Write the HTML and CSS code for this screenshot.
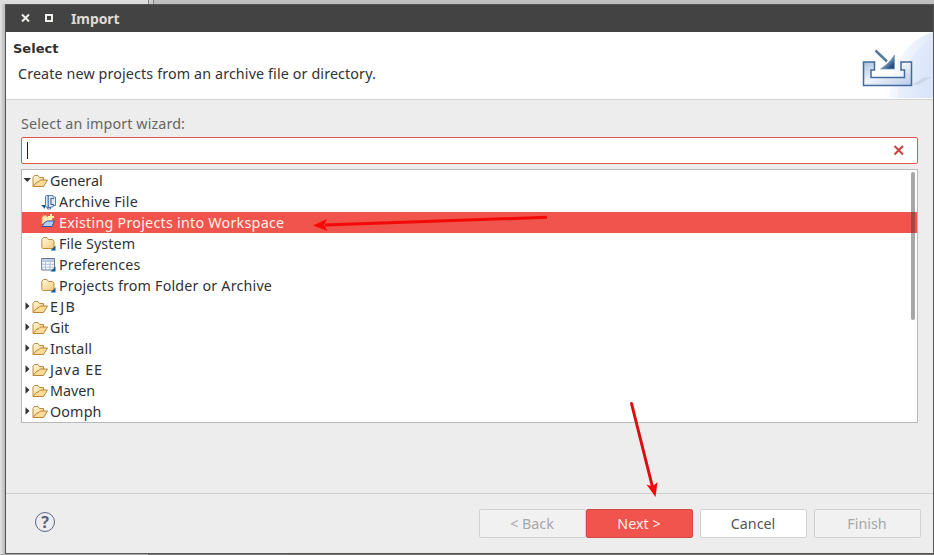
FILE: index.html
```html
<!DOCTYPE html>
<html lang="en">
<head>
<meta charset="utf-8">
<title>Import</title>
<link rel="stylesheet" href="styles.css">
</head>
<body>
<svg class="defs" width="0" height="0">
  <defs>
    <linearGradient id="gold" x1="0" y1="0" x2="1" y2="1"><stop offset="0" stop-color="#fff8df"/><stop offset="1" stop-color="#f3ca76"/></linearGradient>
    <linearGradient id="steel" x1="0" y1="0" x2="1" y2="1"><stop offset="0" stop-color="#a9c2df"/><stop offset="0.45" stop-color="#f0f4fc"/><stop offset="1" stop-color="#b7c9e8"/></linearGradient>
    <linearGradient id="tip" x1="0" y1="0" x2="1" y2="1"><stop offset="0.3" stop-color="#b5cbe2"/><stop offset="0.8" stop-color="#264f82"/></linearGradient>
    <linearGradient id="glow" x1="0" y1="0" x2="1" y2="0.3"><stop offset="0" stop-color="#ffffff"/><stop offset="1" stop-color="#dfe8fa"/></linearGradient>
    <symbol id="open-folder" viewBox="0 0 16 14">
      <path d="M1 12V3.5L2.5 1.5H6L7.5 3.5H11.5V6" fill="url(#gold)" stroke="#b98a42"/>
      <path d="M1 12.5L4.5 8.5L7 7.5L8.5 6H15.5L11.5 12.5Z" fill="#fbdc99" stroke="#b98338" stroke-linejoin="round"/>
    </symbol>
    <symbol id="folder" viewBox="0 0 16 16">
      <path d="M.8 11.5V3.5L2.3 1.5H6L7.5 3.5H11.5L13 5V12.5H2Z" fill="url(#gold)" stroke="#bd8c43" stroke-linejoin="round"/>
      <path d="M14.5 9.5V14.5H9.5Z" fill="#155d93"/>
    </symbol>
  </defs>
</svg>
<main class="window">
  <header class="titlebar">
    <svg class="controls" width="36" height="12" viewBox="0 0 36 12" fill="none" stroke="#eeeeea" stroke-width="2">
      <path d="M3 1.5L10 8.5M10 1.5L3 8.5"/><path d="M27 2H33V8H27Z"/>
    </svg>
    <span class="window-title">Import</span>
  </header>
  <section class="banner">
    <div>
      <h1>Select</h1>
      <p>Create new projects from an archive file or directory.</p>
    </div>
    <svg class="banner-art" width="75" height="66" viewBox="0 0 75 66">
      <path d="M75 0C51 8 35 25 31 66H75Z" fill="url(#glow)"/>
      <path d="M75 7C52 20 39 43 40 66H75Z" fill="#c9daf8" opacity=".2"/>
      <path d="M54 53L65 46L73 45L60 53Z" fill="#aab8d3" opacity=".4"/>
      <path d="M5.5 30H16.5V38H13V45.5H46.5V38H43V30H53.5V53.5H5.5Z" fill="url(#steel)" stroke="#426b9d" stroke-width="1.5"/>
      <path d="M17.5 18.5L29 29.5" stroke="#557a9e" stroke-width="2.5"/>
      <path d="M36.5 23V37H22.5L29 32L32 29Z" fill="url(#tip)" stroke="#7799bd" stroke-width=".7"/>
    </svg>
  </section>
  <section class="content">
    <label for="filter">Select an import wizard:</label>
    <div class="search" id="filter">
      <span class="caret"></span>
      <svg width="12" height="12" viewBox="0 0 12 12"><path d="M1.5 1L10 9.5M10 1L1.5 9.5" stroke="#c84540" stroke-width="2.1"/></svg>
    </div>
    <div class="tree">
      <div class="row group"><svg class="twisty" viewBox="0 0 9 9"><path d="M.5 2H8L4.2 6Z"/></svg><svg class="folder"><use href="#open-folder"/></svg><span>General</span></div>
      <div class="row leaf"><svg class="icon" viewBox="0 0 16 16"><path d="M5 1.5H12V3H14.5V11.5H12V13H9.5V15H6.5V13H4.5V2.5Z" fill="#dfe9f8" stroke="#557fae"/><path d="M7.2 2V13M10 4V11M10 4.5H13M10 10.5H13M6 13.5H10" fill="none" stroke="#466f9f" stroke-width="1.2"/><path d="M0 11H4V15Z" fill="#155d93"/></svg><span class="archive">Archive File</span></div>
      <div class="row leaf selected"><svg class="icon" viewBox="0 0 16 16"><path d="M1 11V4.5L2.5 2.8H5.5L7 4.5H11V8" fill="#f8e8b5" stroke="#d5ae66"/><path d="M1 13.5L3.5 9.5L6.5 8H13.5L11 13.5Z" fill="#b4cbf0" stroke="#35569c"/><path d="M10 1V7M7 4H13" stroke="#fff4a8" stroke-width="2"/></svg><span class="existing">Existing Projects into Workspace</span></div>
      <div class="row leaf"><svg class="icon"><use href="#folder"/></svg><span class="files">File System</span></div>
      <div class="row leaf"><svg class="icon" viewBox="0 0 16 16"><path d="M.7 1.5H13.5V13H.7Z" fill="#f7faff" stroke="#607797"/><path d="M1.2 2H13V4H1.2Z" fill="#bdcfe5"/><path d="M1.2 4.5H13M4.5 4.5V13M9 4.5V13M1.2 7.3H13M1.2 10.2H13" stroke="#a5b5ca" stroke-width=".8"/><path d="M14.5 9.5V14.5H9.5Z" fill="#155d93"/></svg><span class="prefs">Preferences</span></div>
      <div class="row leaf"><svg class="icon"><use href="#folder"/></svg><span class="from-folder">Projects from Folder or Archive</span></div>
      <div class="row group"><svg class="twisty" viewBox="0 0 9 9"><path d="M2.5 .3V7.7L6.5 4Z"/></svg><svg class="folder"><use href="#open-folder"/></svg><span class="ejb">EJB</span></div>
      <div class="row group"><svg class="twisty" viewBox="0 0 9 9"><path d="M2.5 .3V7.7L6.5 4Z"/></svg><svg class="folder"><use href="#open-folder"/></svg><span>Git</span></div>
      <div class="row group"><svg class="twisty" viewBox="0 0 9 9"><path d="M2.5 .3V7.7L6.5 4Z"/></svg><svg class="folder"><use href="#open-folder"/></svg><span class="install">Install</span></div>
      <div class="row group"><svg class="twisty" viewBox="0 0 9 9"><path d="M2.5 .3V7.7L6.5 4Z"/></svg><svg class="folder"><use href="#open-folder"/></svg><span class="java">Java EE</span></div>
      <div class="row group"><svg class="twisty" viewBox="0 0 9 9"><path d="M2.5 .3V7.7L6.5 4Z"/></svg><svg class="folder"><use href="#open-folder"/></svg><span>Maven</span></div>
      <div class="row group"><svg class="twisty" viewBox="0 0 9 9"><path d="M2.5 .3V7.7L6.5 4Z"/></svg><svg class="folder"><use href="#open-folder"/></svg><span class="oomph">Oomph</span></div>
      <div class="scrollbar"></div>
    </div>
  </section>
  <footer>
    <div class="help">?</div>
    <div class="buttons">
      <button class="back" disabled>&lt; Back</button><button class="next">Next &gt;</button>
      <button class="cancel">Cancel</button><button class="finish" disabled>Finish</button>
    </div>
  </footer>
</main>
<svg class="annotations" width="934" height="555" viewBox="0 0 934 555">
  <path d="M547 217.3L325 225" stroke="#f40909" stroke-width="3"/>
  <path d="M313 225.5L327 219L324 225L327.5 231Z" fill="#fa0808"/>
  <path d="M631.5 403.5L652.5 487" stroke="#d9100f" stroke-width="3" stroke-linecap="round"/>
  <path d="M655.5 497L646.5 484.5L652.5 486.5L657.5 482Z" fill="#fa0808"/>
</svg>
</body>
</html>
```

FILE: styles.css
```css
* { box-sizing: border-box; }
body {
  margin: 0;
  width: 934px;
  height: 555px;
  overflow: hidden;
  padding: 4px 0 1px 5px;
  background: linear-gradient(90deg, #ddd 0 148px, #888 148px 149px, #ccc 149px 153px, #888 153px 154px, #c0c0c0 154px) top / 100% 4px no-repeat,
    linear-gradient(90deg, #aaa 0 148px, #777 148px 288px, #767272 288px) bottom / 100% 1px no-repeat,
    linear-gradient(90deg, #e5e5e5, #b8b8b8 5px);
  font: 14.3px/21px "Noto Sans", sans-serif;
  color: #303236;
}
.defs { position: absolute; }
.window {
  width: 929px;
  height: 550px;
  display: flex;
  flex-direction: column;
  border: solid #555;
  border-width: 0 1px 1px;
  background: #ededed;
}
.titlebar {
  height: 28px;
  flex: none;
  display: flex;
  align-items: center;
  padding-left: 13px;
  background: #434343;
  border-top: 1px solid #555;
  color: #dfdbd2;
}
.window-title { margin-left: 16px; font-weight: 700; font-size: 14px; letter-spacing: -.1px; }
.banner {
  height: 68px;
  flex: none;
  display: flex;
  justify-content: space-between;
  padding-left: 7px;
  background: #fff;
  border-bottom: 1px solid #d4d4d4;
}
h1 { margin: 8px 0 0; font: 700 13px/18px "DejaVu Sans", sans-serif; color: #303030; }
.banner p { margin: 5px 0 0 5px; white-space: nowrap; letter-spacing: .125px; }
.content { padding: 13px 15px 0 15px; }
.content label { display: block; height: 24px; line-height: 21px; color: #656565; letter-spacing: .12px; }
.search {
  height: 27px;
  display: flex;
  align-items: center;
  justify-content: space-between;
  padding: 0 12px 0 5px;
  border: 1px solid #dc5751;
  border-radius: 2px;
  background: #fff;
}
.caret { width: 1px; height: 17px; background: #222; }
.tree { height: 254px; position: relative; margin-top: 5px; border: 1px solid #b9b9b9; background: #fff; }
.row { height: 21px; display: flex; align-items: center; white-space: nowrap; }
.group { padding-left: 1px; }
.twisty { width: 9px; height: 9px; fill: #333; }
.folder { width: 16px; height: 14px; margin-right: 2px; }
.leaf { padding-left: 19px; }
.icon { width: 16px; height: 16px; margin-right: 2px; }
.selected { background: #f0544c; color: #fff0ed; }
.selected .icon { margin-bottom: 4px; }
.archive, .existing { letter-spacing: .25px; }
.files { letter-spacing: .09px; }
.prefs, .from-folder { letter-spacing: .18px; }
.ejb { letter-spacing: 1.4px; }
.install { letter-spacing: .15px; }
.java { letter-spacing: .85px; }
.oomph { letter-spacing: .15px; }
.scrollbar { position: absolute; right: 2px; top: 2px; width: 4px; height: 148px; border-radius: 2px; background: rgba(60, 60, 60, .45); }
footer {
  height: 60px;
  margin-top: auto;
  flex: none;
  display: flex;
  justify-content: space-between;
  padding: 15px 12px 0 29px;
  border-top: 1px solid #d0d0d0;
}
.help { width: 20px; height: 20px; margin-top: 3px; border: 1px solid #5c6787; border-radius: 50%; color: #596182; font-weight: 700; font-size: 16px; line-height: 18px; text-align: center; }
.buttons { display: flex; }
button { width: 107px; height: 29px; padding: 0 1px 0 0; border: 1px solid #d2d2d2; border-radius: 2px; font: inherit; color: #555; background: #fff; }
button:disabled { background: #f1f1f1; color: #a7a7a7; }
.next { background: #f0544c; border-color: #cf4c46; color: #fff0ed; }
.cancel, .finish { margin-left: 7px; }
.annotations { position: absolute; inset: 0; fill: none; pointer-events: none; }
```
